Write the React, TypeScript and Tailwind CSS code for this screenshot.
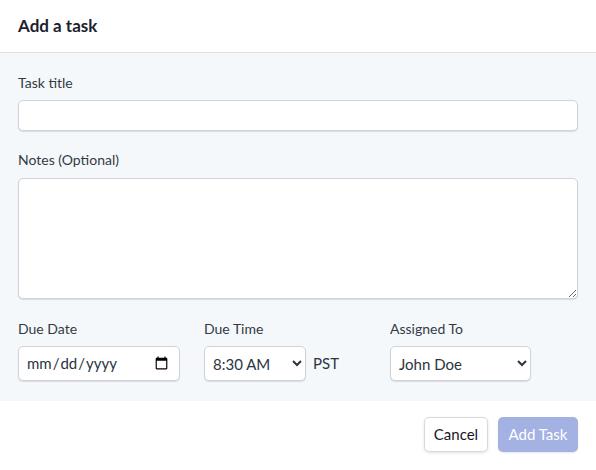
import React from "react";

export default function App() {
  const font = { fontFamily: "Lato, 'Noto Sans', sans-serif" };
  return (
    <div className="w-[596px] h-[470px] bg-white text-[#2d3748]" style={font}>
      <div className="h-[53px] px-[18px] flex items-center border-b border-[#dde1e6] bg-white">
        <h1 className="text-[17px] font-bold text-[#1c2130]">Add a task</h1>
      </div>
      <div className="bg-[#f5f8fb] px-[18px] pt-[21px] pb-[20px]">
        <label className="block text-[14px] leading-[18px] text-[#333a45] mb-[8px]">Task title</label>
        <input
          type="text"
          className="block w-full h-[31px] bg-white border border-[#d0d4da] rounded-[5px] shadow-[0_1px_1px_rgba(0,0,0,0.12)] px-2 text-[15px] outline-none"
        />
        <label className="block text-[14px] leading-[18px] text-[#333a45] mt-[20px] mb-[9px]">Notes (Optional)</label>
        <textarea
          className="block w-full h-[121px] bg-white border border-[#d0d4da] rounded-[5px] shadow-[0_1px_1px_rgba(0,0,0,0.12)] px-2 py-1 text-[15px] outline-none"
        />
        <div className="flex mt-[21px]">
          <div className="w-[186px]">
            <label className="block text-[14px] leading-[18px] text-[#333a45] mb-[8px]">Due Date</label>
            <input
              type="date"
              className="block w-[162px] h-[35px] bg-white border border-[#d0d4da] rounded-[5px] shadow-[0_1px_1px_rgba(0,0,0,0.12)] pl-[7px] pr-[8px] text-[15px] text-[#2d3340] outline-none"
              style={font}
            />
          </div>
          <div className="w-[186px]">
            <label className="block text-[14px] leading-[18px] text-[#333a45] mb-[8px]">Due Time</label>
            <div className="flex items-center">
              <select
                defaultValue="8:30 AM"
                className="block w-[102px] h-[35px] bg-white border border-[#d0d4da] rounded-[5px] shadow-[0_1px_1px_rgba(0,0,0,0.12)] pl-[4px] text-[15px] text-[#2d3340] outline-none"
                style={font}
              >
                <option>8:00 AM</option>
                <option>8:30 AM</option>
                <option>9:00 AM</option>
              </select>
              <span className="ml-[7px] text-[15px] text-[#2d3340]">PST</span>
            </div>
          </div>
          <div>
            <label className="block text-[14px] leading-[18px] text-[#333a45] mb-[8px]">Assigned To</label>
            <select
              defaultValue="John Doe"
              className="block w-[141px] h-[35px] bg-white border border-[#d0d4da] rounded-[5px] shadow-[0_1px_1px_rgba(0,0,0,0.12)] pl-[4px] text-[15px] text-[#2d3340] outline-none"
              style={font}
            >
              <option>John Doe</option>
              <option>Jane Smith</option>
            </select>
          </div>
        </div>
      </div>
      <div className="flex justify-end gap-[10px] px-[18px] pt-[16px]">
        <button className="w-[64px] h-[35px] bg-white border border-[#d6d9de] rounded-[5px] shadow-[0_1px_3px_rgba(0,0,0,0.12)] text-[15px] text-[#16181d]" style={font}>
          Cancel
        </button>
        <button className="w-[80px] h-[35px] bg-[#a3b1e3] rounded-[5px] shadow-[0_1px_2px_rgba(0,0,0,0.1)] text-[15px] text-white" style={font}>
          Add Task
        </button>
      </div>
    </div>
  );
}
